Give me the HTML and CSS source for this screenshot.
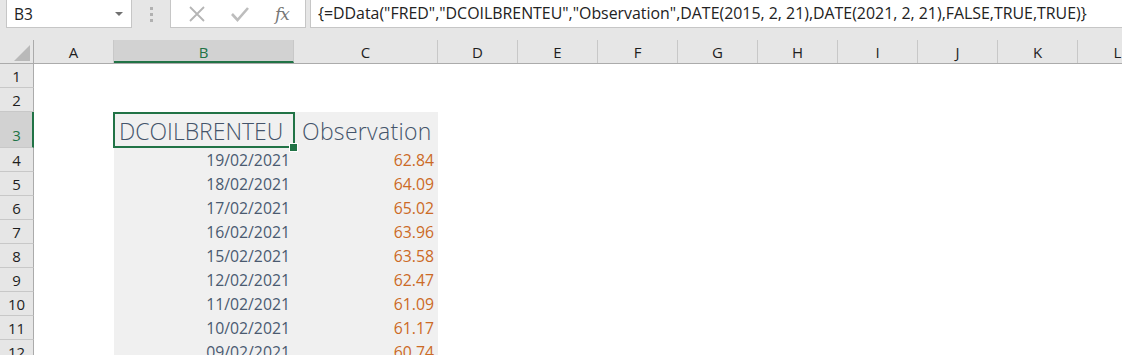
FILE: index.html
```html
<!DOCTYPE html>
<html lang="en">
  <head>
    <meta charset="UTF-8" />
    <title>DData - Brent</title>
    <link rel="stylesheet" href="styles.css">
  </head>
  <body>
    <!-- formula bar -->
    <div class="toolbar">
      <div class="namebox">
        <span>B3</span>
        <span class="caret"></span>
      </div>
      <div class="grip"><i></i><i></i><i></i></div>
      <div class="fxbox">
        <svg class="ico" width="18" height="18" viewBox="0 0 18 18">
          <path d="M2 2 L16 16 M16 2 L2 16" stroke="#b5b5b5" stroke-width="1.8" fill="none" />
        </svg>
        <svg class="ico" width="20" height="18" viewBox="0 0 20 18">
          <path d="M2 9 L7.5 15 L18 3" stroke="#bdbdbd" stroke-width="2.6" fill="none" />
        </svg>
        <span class="fx">fx</span>
      </div>
      <div class="formula">{=DData("FRED","DCOILBRENTEU","Observation",DATE(2015, 2, 21),DATE(2021, 2, 21),FALSE,TRUE,TRUE)}</div>
    </div>

    <!-- sheet -->
    <div class="sheet">
      <div class="colheads">
        <div class="corner"><span class="tri"></span></div>
        <div class="ch ca">A</div>
        <div class="ch cb sel">B</div>
        <div class="ch cc">C</div>
        <div class="ch">D</div>
        <div class="ch">E</div>
        <div class="ch">F</div>
        <div class="ch">G</div>
        <div class="ch">H</div>
        <div class="ch">I</div>
        <div class="ch">J</div>
        <div class="ch">K</div>
        <div class="ch">L</div>
      </div>

      <div class="row"><div class="rh">1</div></div>
      <div class="row"><div class="rh">2</div></div>
      <div class="row tall">
        <div class="rh sel">3</div>
        <div class="cell ca"></div>
        <div class="cell cb fill head active">DCOILBRENTEU</div>
        <div class="cell cc fill head">Observation</div>
      </div>
      <div class="row"><div class="rh">4</div><div class="cell ca"></div><div class="cell cb fill date">19/02/2021</div><div class="cell cc fill val">62.84</div></div>
      <div class="row"><div class="rh">5</div><div class="cell ca"></div><div class="cell cb fill date">18/02/2021</div><div class="cell cc fill val">64.09</div></div>
      <div class="row"><div class="rh">6</div><div class="cell ca"></div><div class="cell cb fill date">17/02/2021</div><div class="cell cc fill val">65.02</div></div>
      <div class="row"><div class="rh">7</div><div class="cell ca"></div><div class="cell cb fill date">16/02/2021</div><div class="cell cc fill val">63.96</div></div>
      <div class="row"><div class="rh">8</div><div class="cell ca"></div><div class="cell cb fill date">15/02/2021</div><div class="cell cc fill val">63.58</div></div>
      <div class="row"><div class="rh">9</div><div class="cell ca"></div><div class="cell cb fill date">12/02/2021</div><div class="cell cc fill val">62.47</div></div>
      <div class="row"><div class="rh">10</div><div class="cell ca"></div><div class="cell cb fill date">11/02/2021</div><div class="cell cc fill val">61.09</div></div>
      <div class="row"><div class="rh">11</div><div class="cell ca"></div><div class="cell cb fill date">10/02/2021</div><div class="cell cc fill val">61.17</div></div>
      <div class="row"><div class="rh">12</div><div class="cell ca"></div><div class="cell cb fill date">09/02/2021</div><div class="cell cc fill val">60.74</div></div>
    </div>
  </body>
</html>
```

FILE: styles.css
```css
* {
  margin: 0;
  padding: 0;
  box-sizing: border-box;
}
body {
  width: 1122px;
  height: 355px;
  overflow: hidden;
  background: #fff;
  font-family: "Open Sans", "Liberation Sans", sans-serif;
}

/* formula bar */
.toolbar {
  height: 40px;
  background: #e6e6e6;
  display: flex;
  align-items: flex-start;
  padding-left: 6px;
}
.namebox {
  width: 126px;
  height: 28px;
  flex-shrink: 0;
  background: #fff;
  border: 1px solid #c6c6c6;
  border-top: none;
  display: flex;
  align-items: center;
  justify-content: space-between;
  padding: 0 8px 0 7px;
  font-size: 15.5px;
  color: #222;
}
.caret {
  width: 0;
  height: 0;
  border-left: 4px solid transparent;
  border-right: 4px solid transparent;
  border-top: 4px solid #707070;
  margin-top: 1px;
}
.grip {
  width: 38px;
  height: 28px;
  flex-shrink: 0;
  display: flex;
  flex-direction: column;
  align-items: center;
  justify-content: center;
  gap: 3px;
}
.grip i {
  width: 3px;
  height: 3px;
  background: #b1b1b1;
}
.fxbox {
  width: 136px;
  height: 28px;
  flex-shrink: 0;
  background: #fff;
  border: 1px solid #c6c6c6;
  border-top: none;
  display: flex;
  align-items: center;
  padding-left: 17px;
}
.fxbox .ico {
  margin-right: 24px;
}
.fx {
  font-family: "DejaVu Serif", "Liberation Serif", serif;
  font-style: italic;
  font-size: 17px;
  color: #777;
  letter-spacing: -1px;
  margin-left: 1px;
}
.formula {
  flex: 1;
  height: 28px;
  margin-left: 4px;
  background: #fff;
  border: 1px solid #c6c6c6;
  border-top: none;
  border-right: none;
  padding-left: 7px;
  font-size: 15.9px;
  line-height: 27px;
  color: #222;
  white-space: nowrap;
  overflow: hidden;
}

/* grid */
.colheads,
.row {
  display: flex;
  height: 24px;
}
.row.tall {
  height: 36px;
}
.colheads {
  background: #e6e6e6;
  border-bottom: 1px solid #ababab;
}
.corner {
  width: 34px;
  flex-shrink: 0;
  border-right: 1px solid #ababab;
  position: relative;
}
.tri {
  position: absolute;
  right: 3px;
  bottom: 2px;
  width: 0;
  height: 0;
  border-left: 16px solid transparent;
  border-bottom: 16px solid #b9b9b9;
}
.ch {
  width: 80px;
  flex-shrink: 0;
  border-right: 1px solid #c8c8c8;
  text-align: center;
  font-size: 15px;
  line-height: 24px;
  color: #1e1e1e;
}
.ca { width: 80px; }
.cb { width: 180px; }
.cc { width: 144px; }
.ch.sel {
  background: #d2d2d2;
  color: #217346;
  border-bottom: 2px solid #217346;
}
.rh {
  width: 34px;
  flex-shrink: 0;
  background: #e6e6e6;
  border-right: 1px solid #ababab;
  border-bottom: 1px solid #c8c8c8;
  display: flex;
  align-items: center;
  justify-content: center;
  font-size: 15px;
  color: #1e1e1e;
}
.rh.sel {
  background: #d2d2d2;
  color: #217346;
  border-right: 2px solid #217346;
  align-items: flex-end;
  padding-bottom: 2px;
  padding-left: 1px;
}

/* cells */
.cell {
  flex-shrink: 0;
  display: flex;
  align-items: flex-end;
  justify-content: flex-end;
  padding: 0 4px 1px 0;
  white-space: nowrap;
}
.fill {
  background: #f0f0f0;
}
.head {
  justify-content: flex-start;
  padding: 0 0 1px 5px;
  font-size: 23px;
  font-weight: 300;
  color: #44546a;
  line-height: 32px;
}
.cc.head {
  padding-left: 8px;
  letter-spacing: 0.3px;
}
.date,
.val {
  font-size: 15.8px;
  line-height: 22px;
}
.date {
  color: #4a5a70;
}
.val {
  color: #cc6a26;
}
.active {
  position: relative;
}
.active::after {
  content: "";
  position: absolute;
  left: -1px;
  top: 0;
  right: -1px;
  bottom: 0;
  border: 2px solid #217346;
}
.active::before {
  content: "";
  position: absolute;
  right: -4px;
  bottom: -4px;
  width: 7px;
  height: 7px;
  background: #217346;
  border: 1px solid #fff;
  z-index: 1;
}
```
